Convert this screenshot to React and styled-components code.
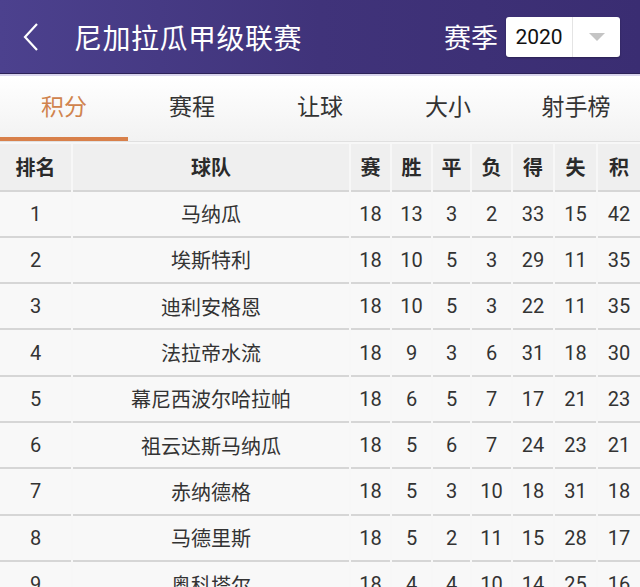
import styled, { createGlobalStyle } from 'styled-components'

const GlobalStyle = createGlobalStyle`
  body {
    margin: 0;
    background: #f7f7f7;
    font-family: Roboto, "Noto Sans CJK SC", sans-serif;
  }
`

const Page = styled.div`
  width: 640px;
  height: 587px;
  overflow: hidden;
  background: #f7f7f7;
`

const Header = styled.header`
  height: 73px;
  display: flex;
  align-items: center;
  padding: 0 20px 0 22px;
  background: linear-gradient(90deg, #4c418e 0%, #40337a 50%, #3a2d72 100%);
  border-bottom: 1px solid #2c2258;
  box-shadow: 0 2px 0 #d8d4ec;
  color: #fff;
`

const Back = styled.svg`
  width: 18px;
  height: 30px;
  margin-right: 34px;
`

const Title = styled.h1`
  flex: 1;
  margin: 0;
  font-size: 28px;
  font-weight: 400;
  letter-spacing: 0.5px;
`

const SeasonLabel = styled.span`
  font-size: 27px;
  margin-right: 8px;
`

const Select = styled.div`
  width: 114px;
  height: 40px;
  background: #fff;
  border-radius: 3px;
  display: flex;
  color: #111;
  box-shadow: 0 1px 2px rgba(0, 0, 0, 0.3);
`

const SelectValue = styled.span`
  width: 66px;
  display: flex;
  align-items: center;
  justify-content: center;
  font-size: 21px;
  border-right: 1px solid #e4e4e4;
`

const SelectArrow = styled.span`
  flex: 1;
  display: flex;
  align-items: center;
  justify-content: center;
  &::after {
    content: '';
    border-left: 8px solid transparent;
    border-right: 8px solid transparent;
    border-top: 8px solid #c4c4c4;
  }
`

const Tabs = styled.nav`
  margin-top: 2px;
  height: 65px;
  display: grid;
  grid-template-columns: repeat(5, 1fr);
  background: linear-gradient(180deg, #ffffff 0%, #f2f2f2 100%);
  border-bottom: 1px solid #e0e0e0;
`

const Tab = styled.div`
  display: flex;
  align-items: center;
  justify-content: center;
  padding-bottom: 3px;
  font-size: 23px;
  color: ${p => (p.$active ? '#d0834d' : '#333')};
  border-bottom: 4px solid ${p => (p.$active ? '#d8804a' : 'transparent')};
`

const Table = styled.div`
  margin-top: 2px;
  display: grid;
  grid-template-columns: 71px 276px 39px 39px 37px 39px 40px 41px 1fr;
  column-gap: 2px;
`

const Cell = styled.div`
  height: ${p => (p.$head ? '45.5px' : '44.3px')};
  display: flex;
  align-items: center;
  justify-content: center;
  border-bottom: 2px solid #d6d6d6;
  background: ${p => (p.$head ? '#efefef' : '#f8f8f8')};
  font-size: 20px;
  font-weight: ${p => (p.$head ? 700 : 400)};
  color: ${p => (p.$head ? '#2a2a2a' : '#333')};
  font-family: ${p => (p.$head ? '"Noto Sans CJK SC", sans-serif' : 'Roboto, "Noto Sans CJK SC", sans-serif')};
`

const heads = ['排名', '球队', '赛', '胜', '平', '负', '得', '失', '积']

const rows = [
  [1, '马纳瓜', 18, 13, 3, 2, 33, 15, 42],
  [2, '埃斯特利', 18, 10, 5, 3, 29, 11, 35],
  [3, '迪利安格恩', 18, 10, 5, 3, 22, 11, 35],
  [4, '法拉帝水流', 18, 9, 3, 6, 31, 18, 30],
  [5, '幕尼西波尔哈拉帕', 18, 6, 5, 7, 17, 21, 23],
  [6, '祖云达斯马纳瓜', 18, 5, 6, 7, 24, 23, 21],
  [7, '赤纳德格', 18, 5, 3, 10, 18, 31, 18],
  [8, '马德里斯', 18, 5, 2, 11, 15, 28, 17],
  [9, '奥科塔尔', 18, 4, 4, 10, 14, 25, 16],
]

const tabs = ['积分', '赛程', '让球', '大小', '射手榜']

export default function App() {
  return (
    <Page>
      <GlobalStyle />
      <Header>
        <Back viewBox="0 0 18 30">
          <path d="M15 2 L3 15 L15 28" fill="none" stroke="#fff" strokeWidth="2.2" />
        </Back>
        <Title>尼加拉瓜甲级联赛</Title>
        <SeasonLabel>赛季</SeasonLabel>
        <Select>
          <SelectValue>2020</SelectValue>
          <SelectArrow />
        </Select>
      </Header>
      <Tabs>
        {tabs.map((t, i) => (
          <Tab key={t} $active={i === 0}>{t}</Tab>
        ))}
      </Tabs>
      <Table>
        {heads.map(h => (
          <Cell key={h} $head>{h}</Cell>
        ))}
        {rows.map(r =>
          r.map((v, i) => <Cell key={r[0] + '-' + i}>{v}</Cell>)
        )}
      </Table>
    </Page>
  )
}
